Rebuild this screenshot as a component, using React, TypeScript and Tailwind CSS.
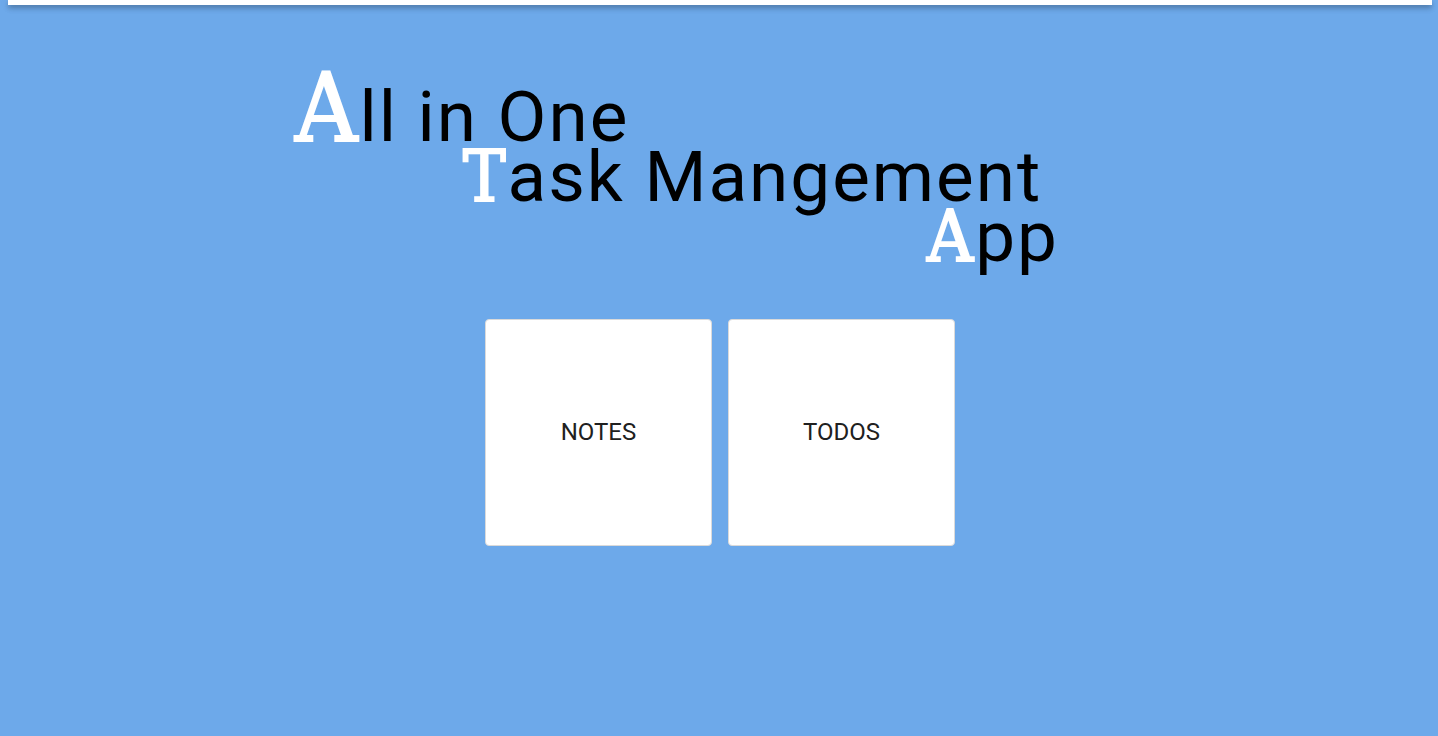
const tile =
  "aspect-square w-[227px] rounded border border-[#dadada] bg-white pb-0.5 text-2xl text-[#202020]";

const initial =
  "font-['DejaVu_Serif_Condensed','DejaVu_Serif',serif] leading-[0] text-white [-webkit-text-stroke:2px_white]";

export default function App() {
  return (
    <div className="min-h-screen bg-[#6da9ea] pr-1.5 pl-2 font-[Roboto,sans-serif] text-black">
      <header className="h-[5px] bg-white shadow-[0_2px_4px_-1px_rgba(0,0,0,0.2),0_4px_5px_0_rgba(0,0,0,0.14),0_1px_10px_0_rgba(0,0,0,0.12)]" />
      <main className="flex flex-col items-center pt-[82px]">
        <h1 className="w-full max-w-[850px] text-[71px] leading-[60px] tracking-[2px]">
          <span className="block">
            <span className={`${initial} text-[96px]`}>A</span>ll in One
          </span>
          <span className="block pl-[168px]">
            <span className={initial}>T</span>ask Mangement
          </span>
          <span className="block pl-[632px]">
            <span className={initial}>A</span>pp
          </span>
        </h1>
        <nav className="mt-[52px] flex gap-4">
          <button type="button" className={tile}>NOTES</button>
          <button type="button" className={tile}>TODOS</button>
        </nav>
      </main>
    </div>
  );
}
